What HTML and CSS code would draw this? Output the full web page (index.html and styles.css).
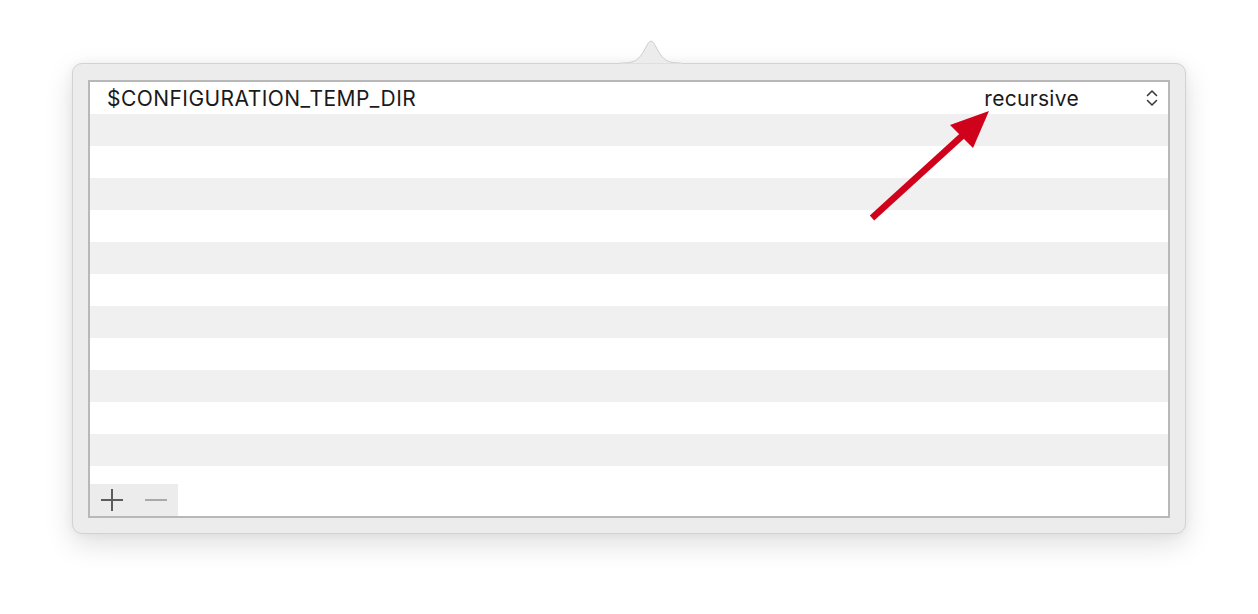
FILE: index.html
```html
<!DOCTYPE html>
<html>
<head>
<meta charset="utf-8">
<link rel="stylesheet" href="styles.css">
</head>
<body>
<div class="stage">
  <div class="popover">
    <svg class="notch" width="80" height="28" viewBox="0 0 80 28">
      <path d="M0 26 C 12 26, 16 24, 21 17 L 27 6.5 Q 30 1.5 33 6.5 L 39 17 C 44 24, 48 26, 60 26" fill="#ececec" stroke="#cfcfcf" stroke-width="1"/>
      <rect x="0" y="26.5" width="61" height="2" fill="#ececec"/>
    </svg>
    <div class="table">
      <div class="row">
        <span class="path">$CONFIGURATION_TEMP_DIR</span>
        <span class="mode">recursive</span>
        <svg class="stepper" width="12" height="18" viewBox="0 0 12 18">
          <path d="M1.5 6.5 L6 2 L10.5 6.5 M1.5 11.5 L6 16 L10.5 11.5" fill="none" stroke="#3a3a3a" stroke-width="1.6" stroke-linecap="round" stroke-linejoin="round"/>
        </svg>
      </div>
      <div class="row alt"></div>
      <div class="row"></div>
      <div class="row alt"></div>
      <div class="row"></div>
      <div class="row alt"></div>
      <div class="row"></div>
      <div class="row alt"></div>
      <div class="row"></div>
      <div class="row alt"></div>
      <div class="row"></div>
      <div class="row alt"></div>
      <div class="filler"></div>
      <div class="toolbar">
        <div class="tools">
          <svg class="tool" width="44" height="32" viewBox="0 0 44 32">
            <path d="M11 16 H33 M22 5 V27" stroke="#5c5c5c" stroke-width="2"/>
          </svg>
          <svg class="tool" width="44" height="32" viewBox="0 0 44 32">
            <path d="M11 16 H33" stroke="#a9a9a9" stroke-width="2"/>
          </svg>
        </div>
      </div>
    </div>
  </div>
  <svg class="annot" width="1258" height="614" viewBox="0 0 1258 614">
    <line x1="872" y1="218" x2="962" y2="136" stroke="#d0021b" stroke-width="6.5"/>
    <polygon points="989,111 950,125 973,148" fill="#d0021b"/>
  </svg>
</div>
</body>
</html>
```
FILE: styles.css
```css
html, body {
  margin: 0;
  padding: 0;
  background: #ffffff;
}
body {
  width: 1258px;
  height: 614px;
  overflow: hidden;
  font-family: Inter, "Liberation Sans", sans-serif;
}
.stage {
  position: relative;
  width: 1258px;
  height: 614px;
  padding: 63px 0 0 72px;
  box-sizing: border-box;
}
.popover {
  position: relative;
  width: 1114px;
  height: 471px;
  box-sizing: border-box;
  background: #ececec;
  border: 1px solid #d2d2d2;
  border-radius: 10px;
  padding: 16px 15px 15px 15px;
  box-shadow: 0 10px 28px rgba(0, 0, 0, 0.13), 0 0 10px rgba(0, 0, 0, 0.05);
}
.notch {
  position: absolute;
  left: 548px;
  top: -27px;
}
.table {
  height: 100%;
  box-sizing: border-box;
  border: 2px solid #b8b8b8;
  background: #ffffff;
  display: flex;
  flex-direction: column;
}
.row {
  height: 32px;
  flex: 0 0 32px;
  display: flex;
  align-items: center;
  padding: 0 10px 0 17px;
  font-size: 21px;
  color: #1a1a1a;
}
.row.alt {
  background: #f0f0f0;
}
.path {
  flex: 1;
  letter-spacing: 0.45px;
}
.mode {
  margin-right: 67px;
  padding-top: 1px;
  letter-spacing: 0.3px;
}
.stepper {
  display: block;
}
.filler {
  flex: 1;
}
.toolbar {
  height: 32px;
  flex: 0 0 32px;
  display: flex;
}
.tools {
  display: flex;
  background: #ececec;
  width: 88px;
}
.tool {
  display: block;
}
.annot {
  position: absolute;
  left: 0;
  top: 0;
  pointer-events: none;
}
```
